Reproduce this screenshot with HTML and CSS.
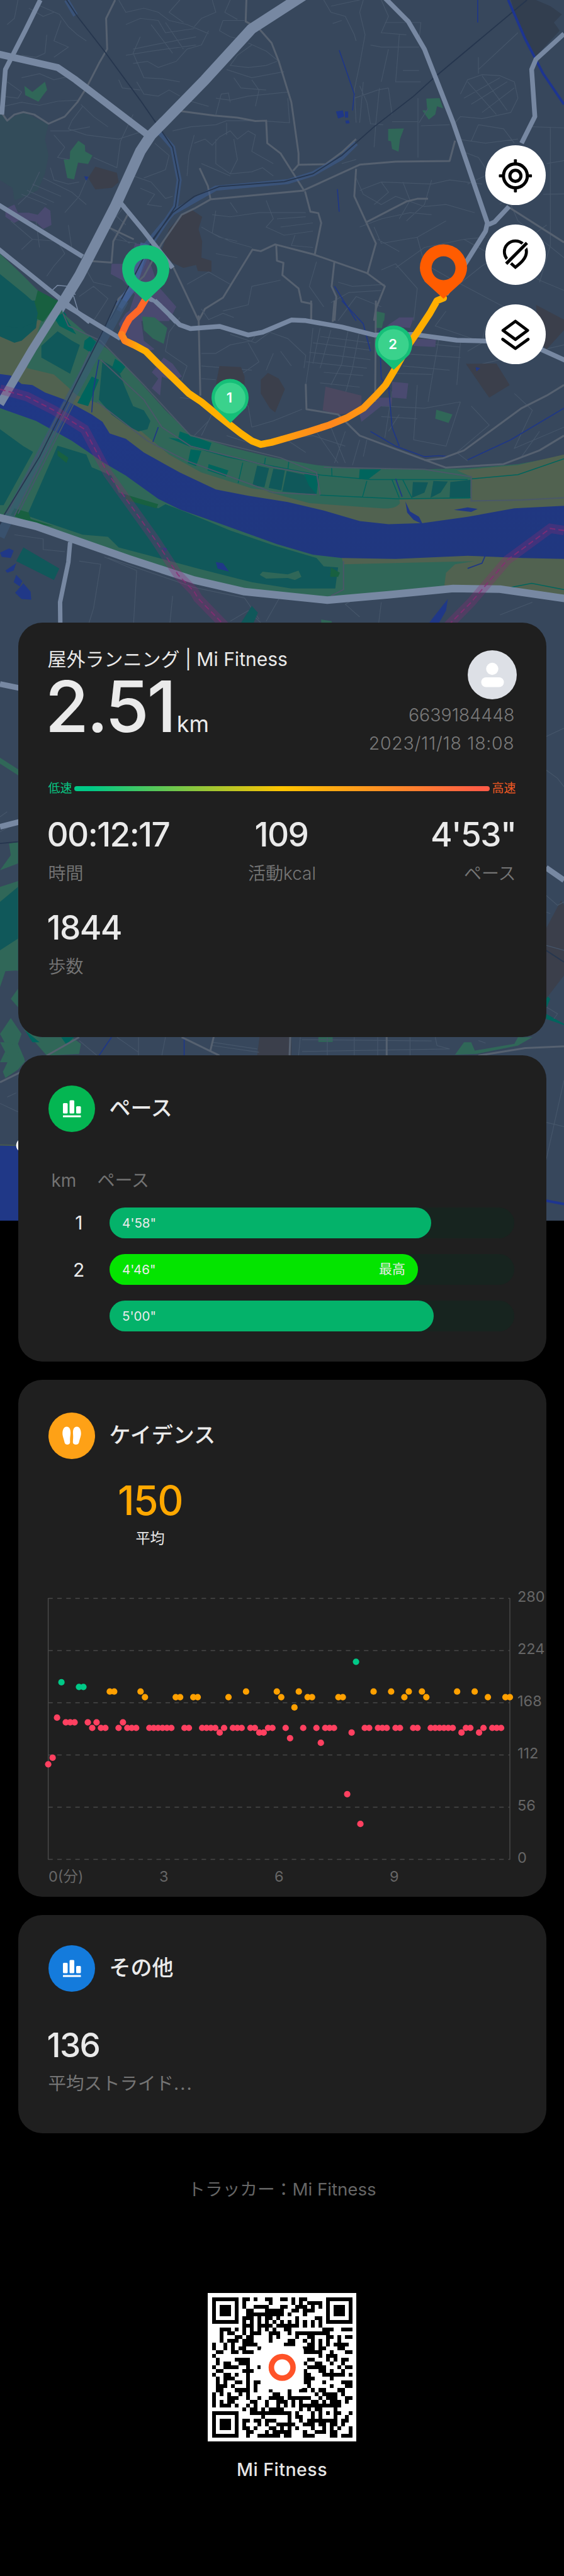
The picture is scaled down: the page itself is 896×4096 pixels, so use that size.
FILE: index.html
```html
<!DOCTYPE html>
<html lang="ja">
<head>
<meta charset="utf-8">
<title>Mi Fitness</title>
<link rel="stylesheet" href="styles.css">
</head>
<body>
<div class="page">
<svg class="map" viewBox="0 0 896 1941" width="896" height="1941">
  <defs>
    <linearGradient id="river" x1="0" y1="0" x2="0" y2="1"><stop offset="0" stop-color="#203887"/><stop offset="1" stop-color="#20377f"/></linearGradient>
    <linearGradient id="track" gradientUnits="userSpaceOnUse" x1="338" y1="0" x2="1100" y2="0">
      <stop offset="0" stop-color="#ff7d20"/><stop offset=".07" stop-color="#ffae00"/><stop offset=".5" stop-color="#ffb000"/><stop offset=".64" stop-color="#ff9614"/><stop offset=".77" stop-color="#ff871c"/><stop offset=".9" stop-color="#ff9a10"/><stop offset="1" stop-color="#ffae00"/>
    </linearGradient>
  </defs>
  <rect width="896" height="1941" fill="#37475c"/>

  <!-- northern districts -->
  <g transform="scale(.57143 .32521)">
    <path fill="#334c5a" d="M0 540 20 590 65 545 100 580 135 605 125 680 135 760 125 850 105 930 70 960 40 980 35 920 0 880Z"/>
    <path class="park" d="M68 420 90 450 125 400 131 440 118 470 107 497 70 465ZM218 688 236 710 237 740 257 760 245 802 217 795 206 877 187 870 177 780 194 778 195 740ZM1185 482 1222 480 1232 530 1215 520 1210 560 1192 585 1174 540 1188 540ZM1079 630 1123 628 1112 680 1108 742 1090 728 1087 690 1079 688ZM1045 1530 1070 1535 1068 1570H1045Z"/>
    <path class="block" d="M265 815 325 845 330 890 312 918 265 926 245 870ZM505 1050 535 1028 562 1060 552 1120 562 1180 560 1260 588 1275 588 1328 550 1325 545 1295 510 1310 480 1285 450 1220 470 1120Z"/>
    <path fill="#323e4f" d="M1420 0H1490L1530 30 1562 70 1540 110 1556 150 1490 275 1470 220 1440 110Z"/>
    <path class="mall" d="M15 1020 40 1000 50 1040 80 1040 105 1050 125 1012 140 1030 143 1100 120 1120 100 1085 60 1070 40 1090 15 1060ZM375 1190 400 1195 440 1400 490 1500 470 1570H350L375 1440 340 1370 308 1340 310 1290 360 1290Z"/>
    <path fill="#1f3787" d="M934 545 953 540 957 570 940 580ZM959 545H968V575H959ZM960 590 970 588 972 603 962 604ZM234 862 246 864 240 885Z"/>
    <path fill="#306758" d="M0 1240 60 1340 105 1420 130 1480 100 1570H0Z"/>
    <path fill="#10585a" d="M0 1340 70 1440 115 1510 110 1570H0Z"/>
    <path fill="#186040" d="M105 1420 165 1475 140 1570H100L95 1490Z"/>
    <path fill="#00655d" d="M165 1500 185 1540 175 1570H145Z"/>
    <path class="lane" d="M50 0 40 90 20 120M80 40 120 80 150 60M100 20 165 70 190 130 215 170 240 200M130 170 125 260 100 280 60 270M170 100 150 200 190 230 150 280M330 0 350 60 400 40 440 60 470 100 520 120 580 165M350 120 390 90 440 100 460 160 540 140M370 240 440 215 545 180M350 270 420 250 545 220M420 120 480 260M460 110 510 240M390 180 370 260 400 380 450 385 500 400M620 100H680M620 100 610 150 640 180 690 200M590 0 600 60 560 90 540 130M640 0 625 60 660 95M500 0 470 60 510 110M580 150 560 220 520 240 490 300 440 330 410 300 370 310M690 210 740 250 775 300M700 220 660 270 640 320 690 330 740 320 770 300M630 340 700 380 790 350M650 380 670 430 740 440M600 480 640 490 690 470 800 450M600 560 615 460 635 455 640 500M520 490 580 520M700 390 720 440 710 520M380 400 400 460 440 470 470 440 500 470M330 390 340 430 390 440M60 380 110 360 150 390 200 370M10 520 60 500 110 515 160 495 215 490M20 400 60 450 50 480 5 470M225 510 260 570 300 620M230 520 200 590 190 630 240 660 330 680 400 640 440 650M140 640 190 640 250 620M260 770 325 820 335 690 370 560M150 660 180 720 160 770 190 780M140 820 150 880 190 900 220 890M470 560 520 500M480 640 530 620 600 610 630 590 720 590 805 600 800 480M540 660 525 760 520 860M540 700 570 680 590 710 610 670 640 640 660 680 690 640 710 660 700 740 760 800M600 680 600 800 640 850 700 840 730 820 760 860M630 600V660M650 680 660 780 640 850M560 800 600 830 640 860M430 700 470 760 460 830 400 870M370 860 420 890 460 970 480 960M390 920 430 950 410 1000 450 1010M110 840 80 950 50 1000M60 950 130 1000M75 930 150 990M90 900 170 960M120 870 200 940 240 1000M240 880 220 960 180 1040M30 1080 90 1170 60 1220M90 1170 160 1180 180 1240 150 1300 130 1350M100 1080 110 1210M190 1100 200 1220 240 1250M350 1000 300 1110 360 1190M350 1100 320 1050M320 1170 380 1190M900 0 920 60 960 80 985 170 990 200M920 30 1000 0M925 115 950 100M1010 0 1000 60 1015 170 1000 315 985 440 990 600M1060 0 1080 80 1060 160 1130 170M1070 110H1170L1165 200M1030 220 1060 230H1165M1110 170 1105 290 1100 400H1170M1120 345H1165M1080 240 1070 320 1060 400M985 480 1050 440 1080 430M1000 420 1020 500 1030 605 1065 610M1010 400 1000 600M1055 430 1045 600 1040 720M1080 430 1090 560M1090 595H1162V770M1162 480V600M1190 530 1165 600M1170 615 1250 610M1330 340 1440 160M1280 460 1300 390 1340 365 1390 370 1430 400 1440 480 1420 550 1340 580 1280 570 1265 600M1300 400 1380 560M1340 370 1410 540M1390 380 1290 480M1410 400 1310 510M1430 430 1340 550M1330 280V360M1270 680 1350 700 1440 680M1330 610 1310 690M1330 610 1400 630 1430 700M1285 740 1330 770 1360 850 1300 900M1520 800 1568 785M1530 620V1200L1500 1380M1480 620 1568 625M1510 950 1568 948M1390 1000 1420 940M1340 900 1250 880 1200 900 1060 890 1000 930M990 870 1010 950 1060 1000 1100 960 1180 1010 1240 1000 1320 1040M1060 890 1080 940 1040 1000M1120 890 1140 980 1110 1070M1200 880 1180 1000 1130 1080M1000 1110 1060 1070 1140 1040 1200 1050M1040 1110 1060 1190 1160 1160 1240 1080M1160 1160 1180 1290 1250 1360 1400 1500 1500 1568M1100 1310 1180 1210 1290 1170 1350 1160M1290 1170 1360 1240 1420 1280 1500 1370 1568 1420M1240 1440 1340 1300 1440 1200 1520 1100M940 1380 980 1400 1070 1390M920 1480 970 1430 1060 1420M940 1568 990 1450 1060 1500M600 1030 590 1140 640 1180 700 1210M590 1050 640 1060 720 1040 850 1040M740 980 760 1070 740 1110 790 1150 870 1130M770 1070 850 1060M780 1110 870 1090M820 1150 810 1200 870 1210M640 990 660 1040M560 1110 610 1160 660 1180M600 1240 660 1260M640 1390 580 1330 520 1390M620 1520 690 1490 700 1400 780 1370M880 1280 860 1400 900 1500M1060 1320 1100 1290 1160 1410 1150 1568M950 800 990 780M1050 1170 1110 1230M1420 1000 1440 1080 1568 1260M220 1450 260 1400 300 1460 260 1568M240 1320 260 1380 310 1400"/>
    <g class="road">
      <path d="M320 0 295 90 298 240 275 310 240 430 215 500 180 570 135 605 95 560 65 548 40 560 20 590 0 540M685 0 683 105 720 140 755 210 775 300 810 500 830 750V805L815 835M830 806 905 803 950 745 990 680M500 543 595 565 660 575 710 592 740 590 743 700 780 750 845 930 1000 805 1100 790 1250 787 1265 688M845 932 585 975 540 1020 505 1050 450 1190 400 1350 330 1460 305 1568M585 972 578 910 555 822M848 935 863 1035 885 1042 893 1090 875 1245M990 825 985 960 1045 1190 1022 1335M1020 1085 1130 985 1160 972H1190M700 1220 725 1228 765 1195 870 1243 1020 1335 1070 1400 1045 1510 1040 1568M768 1200 770 1275 788 1285 785 1345 830 1410 838 1475 866 1485 865 1568M930 1275 922 1400 935 1450 930 1568M702 1220 620 1455 570 1510 552 1568 510 1410 480 1300M300 1110 372 1170M358 1040 315 1180 310 1284 255 1277M1412 1010 1568 1185" />
    </g>
    <path fill="none" stroke="#3d5d92" stroke-width="8" opacity=".55" d="M185 0 210 75M440 640 480 720 498 880 488 1010 420 1190 370 1400 330 1520M400 1210 480 1040 600 920 800 888 870 850 950 770 990 700"/>
    <path fill="none" stroke="#4767a4" stroke-width="13" opacity=".6" d="M402 1190 370 1400 330 1500"/>
    <path class="rail" d="M185 0 215 80 290 250 390 490 445 630 480 720 498 880 488 1010 420 1190 370 1360 305 1568M420 1180 480 1040 540 960 610 912 790 888 870 850 950 760 1040 620 1150 470 1210 375 1465 0"/>
    <path class="stream" d="M943 245 985 460 980 540M938 925 943 1035M930 1400 990 1568M1328 0V110"/>
    <path fill="none" stroke="#1e3590" stroke-width="4" d="M1413 0 1460 190 1510 360 1568 510"/>
    <g class="highway">
      <path stroke-width="17" d="M850-30 700 140 570 390 420 660 390 740 320 1010 220 1350 140 1580"/>
      <path stroke-width="11" d="M-10 262 160 330 210 390 415 665"/>
      <path stroke-width="7.500" d="M112 0 70 150 15 340 5 560M1070-10 1135 105 1180 240 1260 600 1355 1090 1350 1130 1240 1440M1568 165 1490 290 1478 340 1487 570 1450 700M1415 1010 1375 1085 1358 1098M-10 995 230 1255M-10 1210 160 1450 250 1575M332 985 400 1130 480 1310M400 1440 450 1500 490 1575"/>
      <path stroke-width="1.500" d="M145 1420 160 1395 190 1400 205 1450 217 1520M180 1420 210 1440"/>
    </g>
  </g>

  <!-- riverside -->
  <g transform="translate(0 478) scale(.57143 .33537)">
    <path class="lane" d="M500 80 470 150 460 240 520 310 505 380M560 40 580 90 620 60 650 80M560 250H600L640 210 700 190 720 140M560 310 700 330M560 370 600 375M640 160 710 200 750 150 800 180 850 260 845 320M690 200 720 290 670 350M760 250 740 330M780 240 810 310M870 130 860 290 850 400M890 130 870 300M920 140 890 320M970 120 950 300 920 400M1000 140 980 320 960 440M870 200 1030 235M860 245 1030 280M850 290 1020 320M890 170 1030 200M900 340 1010 355M890 390 1000 410M1100 190 1280 220M1110 250 1280 270M1120 310 1250 330M1100 345 1200 350M1060 500 1180 510 1280 480M1060 550 1160 560M1160 400 1150 660 1240 690 1280 480M1220 180 1190 480M1280 200 1270 400M1090 430 1070 650M1110 540 1080 620M700 600 760 570 840 515M700 600 690 500 670 480M560 470 500 460M600 500 560 640M780 640 850 720M870 600 940 770M920 600 960 770M960 620 930 770M1000 660 980 780M1020 660 1010 740M760 660 870 640 960 690M580 570 540 640M630 640 740 700M1350 120 1340 200 1300 240M1240 50 1210 120 1330 190M1440 30 1400 190 1430 230M1430 440 1480 520 1430 700 1568 600M1310 500 1360 590 1270 720 1300 760M1450 740 1500 620M220 1235 280 1250 260 1460 240 1568M290 1215 380 1280 370 1568M300 1220 540 1360 680 1410 720 1510M640 1520 690 1470 750 1568M740 1520 780 1400M1000 1500 960 1440 990 1410M1060 1430 1050 1568M1390 1490 1480 1430M40 1110 120 1130V1180L180 1190M480 1400 470 1568M1340 300 1568 210"/>
    <path class="block" d="M610 310 670 315 680 360V400H600ZM725 375 745 343 775 370 792 420 765 530 750 510 725 440ZM1295 300 1380 298 1417 400 1360 460ZM1490 20 1568 90V140L1520 230 1500 200Z"/>
    <path class="mall" d="M350 60 400 0 490 30 460 90 390 60 400 190 430 230 410 240 350 190 330 110ZM455 270 480 300 506 360 480 380 450 360 445 450 422 415 440 370 422 340ZM1090 385 1135 392 1130 465 1090 460 1088 500 1060 500 1005 575 998 530 1050 460H1090ZM1150 180 1212 185 1210 220 1150 215ZM1075 120 1110 80H1150L1140 130Z"/>
    <path fill="#4b4860" d="M905 408 1005 450 1005 530 940 540 897 520Z"/>
    <path class="park" d="M395 75 430 80 465 130 455 205 425 180 400 140ZM1045 50 1070 60 1062 130 1042 130ZM1213 517 1258 540 1247 580 1210 560ZM893 1512 922 1520 925 1568H893Z"/>

    <path class="park" d="M0 0H165L175 60 250 170 300 230 360 330 460 520 530 635 640 695 760 745 880 780 1000 797 1180 800 1300 795 1440 775 1568 735V1400L1340 1355 1250 1360 1100 1390 920 1410 700 1370 500 1300 300 1185 100 1070 0 1025Z"/>
    <path fill="#516250" d="M0 90 60 110 115 90 75 320 150 350 215 450 270 485 330 530 470 730 560 815 700 890 830 920 1110 940H1305L1310 835 1270 805 1440 780 1568 730V1010L1180 1070 1090 1080 950 1060 600 920 400 740 250 590 0 370Z"/>
    <path fill="#306758" d="M740 905 880 922 1110 940 1112 960Q1100 990 1060 985L860 960Z"/>
    <path fill="#516250" d="M950 1220 1300 1180H1568V1415L1430 1385 1235 1355 1240 1290 1265 1250 1320 1235 955 1250Z"/>
    <path class="field" d="M0 0H110L100 130 60 190 40 200 0 170ZM160 145 200 190 222 210 195 347 115 270V215ZM285 285 330 330 345 400 370 500 400 520 418 570 410 610 385 620 350 590 310 540 275 470ZM0 610 65 690 92 717 10 970 0 970ZM160 688 240 730 255 790 310 830 330 910 350 920 440 985 460 965 520 1005 640 1090 760 1160 880 1220 900 1260 940 1265 932 1365 810 1365 700 1335 550 1270 330 1170 300 1120 230 1110 75 1020ZM715 782 748 795 735 885 702 875ZM760 797 792 805 782 900 747 888ZM797 808 845 825 880 920 785 905ZM1148 860 1190 862 1180 910 1145 935ZM1205 855 1245 858 1225 910 1197 935ZM1252 860 1308 850V935H1250ZM65 1170 165 1270 150 1325 45 1235ZM700 1448 717 1480 695 1568H655Z"/>
    <path fill="#00655d" d="M150 80 175 60 212 160 165 120ZM235 190 250 170 270 200 255 250 232 225ZM320 275 350 310 335 345 312 315ZM255 360 275 375 245 500 215 485ZM500 620 588 675 580 715 525 690 468 650 495 655ZM530 705 560 712 545 785 522 770ZM580 775 635 805 628 835 577 805ZM1000 800H1060L1025 845H998ZM845 822H887L880 920 858 875Z"/>
    <path fill="#186040" d="M0 0H165L120 100 70 60ZM350 920 440 965 435 985 350 945ZM160 710 190 745 185 770 160 735ZM40 985 80 1005 85 1035 150 1070 100 1060 30 1015ZM920 1265 945 1290 940 1310 918 1310Z"/>
    <path class="field" d="M0 0H95L105 60 100 100 60 130 0 120Z"/>
    <path class="park" d="M730 1285 800 1298 830 1280 838 1310 820 1325 800 1315 740 1318 722 1300Z"/>
    <path fill="url(#river)" d="M0 348 30 355 60 395 90 400 125 435 180 470 255 540 285 575 305 630 350 655 400 720 500 815 600 895 690 925 800 955 900 995 1000 1045 1080 1060 1175 1055 1300 1025 1430 985 1568 973V1225L1450 1220 1300 1210 1100 1225 950 1220 870 1205 770 1155 600 1050 500 990 440 940 350 830 290 770 200 665 100 570 0 510Z"/>
    <path fill="#203887" d="M1127 953 1140 1000 1165 1025 1175 1060 1150 1040 1132 1005ZM1262 992 1300 980 1328 988 1310 1002ZM0 1195 25 1175 38 1185 30 1220 5 1215ZM15 1280 45 1245 38 1280 20 1290ZM45 1300 62 1330 55 1355 38 1335ZM65 1340 85 1380 87 1418 60 1415 42 1385ZM1245 1415 1240 1470 1220 1530 1200 1568H1175L1210 1490ZM600 1240 620 1245 637 1285 605 1270ZM450 1170 465 1175 460 1190ZM1322 315 1335 320 1325 335Z"/>
    <path fill="none" stroke="#00655d" stroke-width="1.500" d="M530 690 630 740 730 775 880 825 1030 848H1300M890 922 1110 940 1310 935M675 768 662 865M738 745 735 780M803 763 800 805M922 790 923 835M1020 855 1008 930M1090 850 1110 935M1120 850 1145 935M1310 845 1440 825 1568 750M1310 1360 1420 1360 1478 1340 1568 1370"/>
    <path fill="none" stroke="#4a5868" stroke-width="2" d="M175 60 190 120 280 190 400 400 530 640 780 745 880 815 890 920M280 280 400 470 450 600 530 690 760 790 885 830M900 790 1180 800 1310 835V950L1450 945 1568 935M270 480 410 665 520 760 760 910 880 920M955 1235V1370L920 1400M250 240 180 500"/>
    <path class="stream" d="M275 280 260 420 255 530M440 600 425 670M1100 845 1118 930M1030 620 1100 690 1180 740 1220 735 1250 740M1080 400 1090 600 1110 690M1568 510 1420 660 1300 755M1350 1205 1340 1245 1300 1270M950 0 1010 110 1030 240M1055 140 1060 370 1085 420"/>
    <path stroke="#3c5a7c" stroke-width="15" opacity=".55" fill="none" d="M345 0 180 510 35 990 0 1120"/>
    <path fill="none" stroke="#45566b" stroke-width="2" d="M195 480 40 1020M180 480 20 1010M205 490 50 1010"/>
    <path class="rail" d="M325 0 290 130 210 400 110 740 10 1020 0 1060"/>
    <g class="road"><path d="M552 70 557 450M865 0V90M930 0 925 100M1045 0 1043 480M850 395 852 515 940 540 1000 640 1180 755 1240 792 1400 775 1500 710 1568 640M1180 757 1230 748 1290 710 1450 510 1520 450 1568 400"/></g>
    <g class="highway">
      <path stroke-width="13" d="M175 0 90 230 0 490"/>
      <path stroke-width="12" d="M-10 1025 100 1070 360 1225 540 1325 680 1380 910 1420 1080 1395 1260 1365 1390 1368 1580 1415"/>
      <path stroke-width="7.500" d="M180 20 335 180M430 0 455 40 500 115 530 133 610 122 690 163 730 150 810 92 850 95 950 125 1040 163 1150 160 1270 188 1360 192 1500 228 1580 290"/>
      <path stroke-width="7" d="M195 1145 190 1240 167 1430 168 1580"/>
    </g>
    <g fill="none" stroke="#8b2b75"><path class="border" d="M0 420 75 455 150 520 235 610 300 820 430 1130 495 1300 540 1380 550 1410 640 1568M1568 1090 1530 1080 1410 1230 1340 1370 1310 1430 1230 1568"/><path class="border-core" d="M0 420 75 455 150 520 235 610 300 820 430 1130 495 1300 540 1380 550 1410 640 1568M1568 1090 1530 1080 1410 1230 1340 1370 1310 1430 1230 1568"/></g>
    <path class="track" stroke="#ff6728" d="M404-5 388 42 360 85 350 115 338 160"/>
    <path class="track" stroke="url(#track)" d="M338 160 347 190 372 210 405 240 440 300 480 365 525 440 560 480 610 550 640 590 670 630 700 665 725 682 755 672 800 650 860 620 915 590 965 555 1010 510 1045 450 1072 400 1100 320 1140 200 1160 150 1195 60 1215 0 1233-12"/>
  </g>

  <!-- strips visible beside and between the cards -->
  <g transform="translate(0 1290.7) scale(.57143 .26557)">
    <path class="park" d="M25 190 50 180V310L0 350 30 260ZM0 450 50 415V1170L30 1120 50 1060 50 950 15 955 0 1050ZM30 1235 60 1330 50 1390 68 1480V1500H0L20 1410 0 1330ZM65 1300 130 1460 220 1450 225 1390 200 1350 110 1350ZM885 1350H925V1378H885ZM1290 1380 1310 1380 1320 1430 1430 1390 1440 1350H1480L1440 1400 1325 1450 1265 1455Z"/>
    <path class="field" d="M0 540 50 450V760L0 830Z"/>
    <path fill="#00655d" d="M1518 1095 1530 1120 1518 1180ZM1518 1210 1568 1270V1278L1518 1240ZM70 1310 110 1380 90 1380ZM170 1350H205L185 1395Z"/>
    <path class="block" d="M722 1340H810V1460H715ZM1560 530 1568 560V980L1518 1120V700Z"/>
    <path class="lane" d="M385 1350V1460M325 1350 385 1440M460 1350 450 1460M590 1380 715 1420M590 1400 720 1440M835 1350 830 1460M840 1365 1200 1372M840 1435 1250 1420M910 1350V1460M985 1350V1460M1050 1350V1460M1140 1350V1460M1210 1350 1215 1400 1250 1420M1330 1370 1350 1385M0 120 50 60M1518 500 1550 560 1568 540M1518 600 1530 610M1520 1170 1550 1210 1540 1240M1518 800 1568 830M0-300 30-270M1518-450 1568-500M1518-250 1550-200 1568-150M1518 0V60M0 30 20 0M220 1370 270 1460"/>
    <path class="rail" d="M0 190 50 180M1518 830 1568 900"/>
    <path class="stream" d="M310 1350 275 1460M512 1350V1460"/>
    <g class="road"><path d="M220 1350 130 1460M595 1340 585 1430M505 1350 610 1460M807 1340 805 1460M1075 1340V1460M1568 1405 1460 1415 1330 1460"/></g>
    <g class="highway"><path stroke-width="9" d="M0 90 55 60M1518 335 1568 410M0-765 55-740"/></g>
    <path fill="none" stroke="#306758" stroke-width="8" d="M-10-320 55-230"/>
  </g>
  <g transform="translate(0 1657.2) scale(.57143 .33537)">
    <path class="park" d="M0 0H30L70 90 50 130 15 170 8 140 25 80Z"/>
    <g class="road"><path d="M0 190 60 140"/></g>
    <path class="lane" d="M0 290 50 330M20 260 45 240M1518 380 1568 400M1568 180 1518 560"/>
    <path fill="#203887" d="M0 490H60V847H0Z"/>
    <path fill="none" stroke="#47594f" stroke-width="2" d="M0 487 60 490"/>
    <path fill="none" stroke="#1e3590" stroke-width="4" d="M1515 750 1568 767"/>
    <ellipse cx="65" cy="489" rx="20" ry="34" fill="#fff"/>
  </g>
  <rect y="1940.900" width="896" height="2" fill="#000"/>

  <!-- start and finish pins -->
  <path fill="#15bf78" fill-rule="evenodd" d="M231.500 480 202 452Q194 440 194 427A37.500 37.500 0 0 1 269 427Q269 440 261 452ZM231.500 411.500a18.500 18.500 0 1 0 0 37 18.500 18.500 0 1 0 0-37Z"/>
  <path fill="#ff5c00" fill-rule="evenodd" d="M704.600 475 675 448Q667 436 667 426A37.500 37.500 0 0 1 742 426Q742 436 734 448ZM704.600 407.500a19 19 0 1 0 0 38 19 19 0 1 0 0-38Z"/>
  <g class="marker"><path fill="#15bf78" d="M366 672.500 341 649Q336 641 336 632A29.500 29.500 0 0 1 395 632Q395 641 390 649Z"/><circle cx="365.500" cy="633" r="24.500" fill="#3ad28c"/><text x="364.500" y="640">1</text></g>
  <g class="marker"><path fill="#15bf78" d="M625.500 588 600 564Q596 556 596 547A29.500 29.500 0 0 1 655 547Q655 556 650 564Z"/><circle cx="625" cy="548" r="24.500" fill="#3ad28c"/><text x="624" y="555">2</text></g>
</svg>

<div class="tools">
  <svg class="tool" viewBox="0 0 360 360"><g fill="none" stroke="#000"><circle cx="180" cy="183" r="71.500" stroke-width="19"/><circle cx="180" cy="183" r="33" stroke-width="19"/></g><path d="M171 88q0-4 4-4h10q4 0 4 4v24h-18zM171 254h18v24q0 4-4 4h-10q-4 0-4-4zM108 174v18H85q-4 0-4-4v-10q0-4 4-4zM251 174h24q4 0 4 4v10q0 4-4 4h-24z"/></svg>
  <svg class="tool" viewBox="0 0 360 360"><path d="M180 256C150 230 114 202 114 164A66 66 0 0 1 246 164C246 202 212 231 180 256Z" fill="none" stroke="#000" stroke-width="18"/><path d="M112 248 262 100" stroke="#fff" stroke-width="36"/><path d="M125 235 249 110" stroke="#000" stroke-width="19"/></svg>
  <svg class="tool" viewBox="0 0 360 360"><g fill="none" stroke="#000" stroke-width="18" stroke-linejoin="round" stroke-linecap="round"><path d="M180 101 253 156 180 210 106 156Z"/><path d="M104 209 180 264 256 209"/></g></svg>
</div>

<main class="cards">
  <section class="card summary">
    <div class="summary-head">
      <div class="summary-main">
        <h1 class="title">屋外ランニング | Mi Fitness</h1>
        <div class="distance"><span class="distance-value">2.51</span><span class="distance-unit">km</span></div>
      </div>
      <div class="user">
        <svg class="avatar" viewBox="0 0 78 78"><circle cx="39" cy="39" r="39" fill="#dde0e6"/><circle cx="39" cy="29.500" r="9.700" fill="#fff"/><rect x="21.500" y="43" width="36" height="15.500" rx="7.500" fill="#fff"/></svg>
        <div class="user-id">6639184448</div>
        <div class="user-date">2023/11/18 18:08</div>
      </div>
    </div>
    <div class="speed"><span class="slow">低速</span><span class="speed-bar"></span><span class="fast">高速</span></div>
    <div class="stats">
      <div class="stat"><div class="value">00:12:17</div><div class="label">時間</div></div>
      <div class="stat center"><div class="value">109</div><div class="label">活動kcal</div></div>
      <div class="stat right"><div class="value">4'53"</div><div class="label">ペース</div></div>
      <div class="stat"><div class="value">1844</div><div class="label">歩数</div></div>
    </div>
  </section>

  <section class="card pace">
    <div class="card-head">
      <svg class="icon" viewBox="0 0 74 74"><circle cx="37" cy="37" r="37" fill="#04b652"/><g fill="#fff"><rect x="23" y="28" width="7.500" height="16.500" rx="1.500"/><rect x="33.500" y="23.500" width="7.500" height="21" rx="1.500"/><rect x="44" y="33" width="7.500" height="11.500" rx="1.500"/><rect x="23" y="47.500" width="28.500" height="3" rx=".5"/></g></svg>
      <h2>ペース</h2>
    </div>
    <div class="pace-head"><span>km</span><span>ペース</span></div>
    <div class="pace-row"><span class="km">1</span><div class="rail-bar"><div class="fill" style="width:511px"><span>4'58"</span></div></div></div>
    <div class="pace-row"><span class="km">2</span><div class="rail-bar"><div class="fill best" style="width:490px"><span>4'46"</span><span class="best-label">最高</span></div></div></div>
    <div class="pace-row"><span class="km"></span><div class="rail-bar"><div class="fill" style="width:515px"><span>5'00"</span></div></div></div>
  </section>

  <section class="card cadence">
    <div class="card-head">
      <svg class="icon" viewBox="0 0 74 74"><circle cx="37" cy="37" r="37" fill="#fea116"/><path fill="#fff" d="M29 22.500C24 22.500 21.500 29 22.500 36 23.500 41 25 44 25.500 47.500 26.500 52.500 34.500 52 34.300 47 34 42 34.500 39 35 34 35.500 27 33.500 22.500 29 22.500ZM45 22.500C50 22.500 52.500 29 51.500 36 50.500 41 49 44 48.500 47.500 47.500 52.500 38.500 52 38.800 47 39 42 39.500 39 39 34 38.500 27 40.500 22.500 45 22.500Z"/></svg>
      <h2>ケイデンス</h2>
    </div>
    <div class="average"><div class="average-value">150</div><div class="average-label">平均</div></div>
    <svg class="chart" viewBox="0 0 839 500" width="839" height="500">
      <g class="grid"><path d="M47.600 38.500H781M47.600 121.500H781M47.600 204.500H781M47.600 287.500H781M47.600 370.500H781M47.600 453.500H781"/></g>
      <path class="axis" d="M47.600 38V454M781 38V454"/>
      <g id="dots"></g>
      <g class="tick"><text x="793" y="44">280</text><text x="793" y="127">224</text><text x="793" y="210">168</text><text x="793" y="293">112</text><text x="793" y="376">56</text><text x="793" y="459">0</text><text x="48" y="489">0(分)</text><text x="224" y="489">3</text><text x="407" y="489">6</text><text x="590" y="489">9</text></g>
    </svg>
  </section>

  <section class="card other">
    <div class="card-head">
      <svg class="icon" viewBox="0 0 74 74"><circle cx="37" cy="37" r="37" fill="#147bdc"/><g fill="#fff"><rect x="23" y="28" width="7.500" height="16.500" rx="1.500"/><rect x="33.500" y="23.500" width="7.500" height="21" rx="1.500"/><rect x="44" y="33" width="7.500" height="11.500" rx="1.500"/><rect x="23" y="47.500" width="28.500" height="3" rx=".5"/></g></svg>
      <h2>その他</h2>
    </div>
    <div class="stat"><div class="value">136</div><div class="label">平均ストライド<span class="dots">...</span></div></div>
  </section>
</main>

<footer class="footer">
  <div class="tracker">トラッカー：Mi Fitness</div>
  <svg class="qr" viewBox="-1.100 -1.100 39.200 39.200"><rect x="-1.100" y="-1.100" width="39.200" height="39.200" fill="#fff"/><path id="qr-modules" shape-rendering="crispEdges"/><rect x="12.800" y="12.900" width="11.400" height="11.400" rx="1.200" fill="#fff"/><circle cx="18.500" cy="18.500" r="2.850" fill="none" stroke="#ff5328" stroke-width="1.450"/></svg>
  <div class="brand">Mi Fitness</div>
</footer>
</div>
<script src="script.js"></script>
</body>
</html>
```
FILE: styles.css
```css
* { box-sizing: border-box; }
body { margin: 0; background: #000; font-family: Inter, "Noto Sans CJK JP", sans-serif; color: #eaeaea; }
.page { position: relative; width: 896px; height: 4096px; overflow: hidden; }
h1, h2 { margin: 0; font-weight: 400; }

.map { position: absolute; left: 0; top: 0; }
.map path { vector-effect: non-scaling-stroke; }
.map .park { fill: #306758; }
.map .field { fill: #10585a; }
.map .block { fill: #3b3f4b; }
.map .mall { fill: #4a4a70; }
.map .lane { fill: none; stroke: #46566a; stroke-width: 1.2; }
.map .road { fill: none; stroke: #566170; stroke-width: 3; stroke-linejoin: round; }
.map .highway { fill: none; stroke: #7788a2; stroke-linejoin: round; }
.map .stream { fill: none; stroke: #1f3787; stroke-width: 1.7; }
.map .rail { fill: none; stroke: #26364e; stroke-width: 1.8; }
.map .border { stroke-width: 15; opacity: .3; }
.map .border-core { stroke-width: 2; stroke-dasharray: 9 5; opacity: .75; }
.map .track { fill: none; stroke-width: 11; stroke-linejoin: round; stroke-linecap: round; }
.marker text { fill: #fff; font-size: 22px; font-weight: 600; text-anchor: middle; }

.tools { position: absolute; left: 771px; top: 230.500px; display: flex; flex-direction: column; gap: 31px; }
.tool { width: 95.600px; height: 95.600px; border-radius: 50%; background: #fff; }

.cards { position: relative; padding: 990px 28.500px 0; display: flex; flex-direction: column; gap: 28.800px; }
.card { background: #1f1f1f; border-radius: 38px; width: 839px; padding: 0 48px; overflow: hidden; }
.summary { height: 659.400px; padding-top: 36px; }
.summary-head { display: flex; justify-content: space-between; height: 212px; }
.title { font-size: 30px; line-height: 44px; margin-left: -1px; white-space: nowrap; }
.distance { display: flex; align-items: baseline; height: 110px; line-height: 110px; margin: -2px 0 0 -5px; }
.distance-value { font-size: 113px; font-weight: 500; letter-spacing: -3.500px; }
.distance-unit { font-size: 36px; margin-left: 4px; }
.user { display: flex; flex-direction: column; align-items: flex-end; color: #7a7a7a; font-size: 28.500px; font-weight: 300; }
.avatar { width: 78px; height: 78px; margin: 7.500px -1px 0 0; }
.user-id, .user-date { line-height: 45.400px; padding-right: 2px; }
.user-id { margin-top: 2px; }
.user-date { letter-spacing: .7px; }
.speed { display: flex; align-items: center; height: 32px; gap: 3px; font-size: 19px; line-height: 32px; }
.slow { color: #08c582; }
.fast { color: #f15a24; }
.speed-bar { flex: 1; height: 8px; border-radius: 4px; background: linear-gradient(90deg, #00c987 4%, #ffc400 50%, #ff5c46 98%); }
.stats { display: grid; grid-template-columns: 1fr 1fr 1fr; row-gap: 34px; margin-top: 24.500px; }
.value { font-size: 53px; line-height: 64px; font-weight: 500; letter-spacing: -1.600px; margin-left: -2px; white-space: nowrap; }
.label { font-size: 28px; line-height: 40px; color: #757575; margin-top: 10px; white-space: nowrap; }
.stats .label { font-weight: 350; }
.center { text-align: center; }
.right { text-align: right; }

.card-head { display: flex; align-items: center; gap: 23px; height: 74px; }
.card-head h2 { font-size: 34px; line-height: 50px; font-weight: 500; padding-bottom: 2px; }
.icon { width: 74px; height: 74px; }
.pace { height: 487px; padding-top: 47.500px; }
.pace-head { display: flex; gap: 33px; margin: 54px 0 20px 5px; height: 46px; line-height: 46px; font-size: 28px; color: #727272; }
.pace-row { display: flex; height: 49.600px; margin-bottom: 24.500px; align-items: center; }
.km { width: 97.500px; font-size: 30px; text-align: center; }
.rail-bar { width: 643px; height: 49.600px; border-radius: 25px; background: #17241f; }
.fill { height: 100%; border-radius: 25px; background: #04b26a; display: flex; align-items: center; justify-content: space-between; padding: 0 20px; font-size: 20.500px; }
.best { background: #04e400; }
.best-label { font-size: 21px; line-height: 30px; padding-bottom: 2px; }

.cadence { height: 822.400px; padding: 52.500px 0 0; }
.cadence .card-head, .cadence .average { margin-left: 48px; }
.average { width: 324px; text-align: center; height: 182.600px; padding-top: 28px; }
.average-value { font-size: 64px; font-weight: 500; line-height: 76px; letter-spacing: -1.500px; color: #ffa800; }
.average-label { font-size: 23px; line-height: 34px; margin-top: 5px; }
.chart { display: block; }
.grid { fill: none; stroke: #484848; stroke-width: 1.500; stroke-dasharray: 7.200 7.130; }
.axis { fill: none; stroke: #484848; stroke-width: 1.500; }
.tick { fill: #666; font-size: 23.500px; }

.other { height: 347px; padding-top: 48px; }
.other .stat { margin-top: 53px; }
.other .label { margin-top: 9px; font-size: 28.500px; }
.dots { letter-spacing: 2px; }

.footer { display: flex; flex-direction: column; align-items: center; }
.tracker { margin-top: 69px; line-height: 40px; font-size: 27.700px; color: #666; }
.qr { width: 236.600px; height: 236.600px; margin-top: 144.500px; }
.brand { margin-top: 27px; font-size: 28.500px; line-height: 36px; font-weight: 500; letter-spacing: .5px; color: #e6e6e6; }
```
FILE: script.js
```js
// Cadence samples, one every seven seconds
const samples = [102,109,152,190,147,147,147,185,185,147,141,147,141,141,180,180,141,147,141,141,141,180,174,
  141,141,141,141,141,141,174,174,141,141,174,174,141,141,141,141,136,141,174,141,141,141,180,141,141,136,136,
  141,141,180,174,141,130,163,180,141,174,174,141,125,141,141,141,174,174,70,136,212,38,141,141,180,141,141,141,
  180,141,141,174,180,141,141,180,174,141,141,141,141,141,141,180,136,141,141,180,136,141,174,141,141,141,174,174];
document.getElementById('dots').innerHTML = samples.map((v, i) => {
  const color = v > 182 ? '#00c987' : v > 155 ? '#ffa000' : '#ff4060';
  return `<circle cx="${(47.6 + i * 6.985).toFixed(1)}" cy="${(453.5 - v * 415 / 280).toFixed(1)}" r="5.1" fill="${color}"/>`;
}).join('');

// QR rows: [start, end) column runs of dark modules
const rows = [
  '8-10 11-12 14-16 18-20 21-22 23-25','8-9 15-16 21-22 23-24 25-29','8-9 11-15 18-20 22-25 26-27 28-29',
  '9-11 14-19 21-23 24-27','9-19 20-21 24-25','8-11 12-13 14-16 17-18 22-23 27-29',
  '8-9 10-11 12-13 14-15 16-17 18-19 20-21 22-23 24-25 26-27 28-29','8-11 12-16 17-23 24-25 26-27 28-29',
  '2-5 6-7 8-9 10-11 12-13 14-15 16-17 19-21 29-32 34-37','2-3 4-6 8-9 10-13 15-18 20-21 22-31',
  '2-3 6-8 9-11 15-16 17-18 22-23 25-27 30-32 33-34 35-37','2-3 4-7 8-11 20-22 15-16 24-25 26-27 28-29 30-31 33-34',
  '0-1 3-4 5-6 8-12 19-22 25-27 28-29 30-31 32-36','0-1 3-4 5-6 7-9 12-13 24-27 28-30 33-35',
  '1-3 5-7 8-11 24-29 31-32 35-37','0-1 28-29 30-33','1-2 6-10 25-27 30-31 32-33 34-36',
  '1-2 3-5 7-10 24-25 27-29 31-32 34-35','0-1 3-7 9-10 12-13 25-30 33-34 35-37','1-3 8-11 24-25 28-30 31-32 34-35',
  '0-1 3-5 6-7 9-10 24-26 29-35 36-37','1-2 3-6 9-10 24-27 31-32','1-2 3-4 6-8 9-10 11-13 24-26 29-30 34-37',
  '1-4 5-6 9-10 11-12 25-26 31-32 35-37','1-3 6-10 11-12 15-16 20-21 23-25 26-27 28-30 33-35',
  '0-1 2-3 4-5 7-8 9-10 16-18 20-21 27-28 29-33 34-35','0-1 4-7 9-10 12-13 15-19 20-26 28-29 30-33 35-37',
  '0-1 2-3 4-6 10-12 14-15 17-20 21-22 23-24 26-28 29-30 31-34 35-36','0-1 2-5 6-7 9-10 11-12 14-15 17-18 19-20 21-22 23-34',
  '8-9 10-12 13-14 15-19 23-24 25-26 27-29 32-33','10-21 22-23 26-27 28-29 30-31 32-34 36-37',
  '13-14 20-21 22-24 26-27 28-29 32-33 35-36','8-10 11-13 14-17 20-21 23-24 25-33 34-36',
  '8-9 12-13 14-15 17-22 24-27 28-30 31-33 34-35','8-10 11-12 15-17 18-19 20-21 22-23 26-27 29-30 31-32 33-34 36-37',
  '9-11 14-15 16-21 24-25 27-30 31-33 36-37','9-10 12-18 19-21 24-27 31-33 34-37'];
const finder = (x, y) => `M${x} ${y}h7v7h-7zM${x + 1} ${y + 1}v5h5v-5zM${x + 2} ${y + 2}h3v3h-3z`;
document.getElementById('qr-modules').setAttribute('d',
  finder(0, 0) + finder(30, 0) + finder(0, 30) + rows.map((r, y) => r.split(' ').map(s => {
    const [a, b] = s.split('-').map(Number);
    return `M${a} ${y}h${b - a}v1h${a - b}z`;
  }).join('')).join(''));
```
